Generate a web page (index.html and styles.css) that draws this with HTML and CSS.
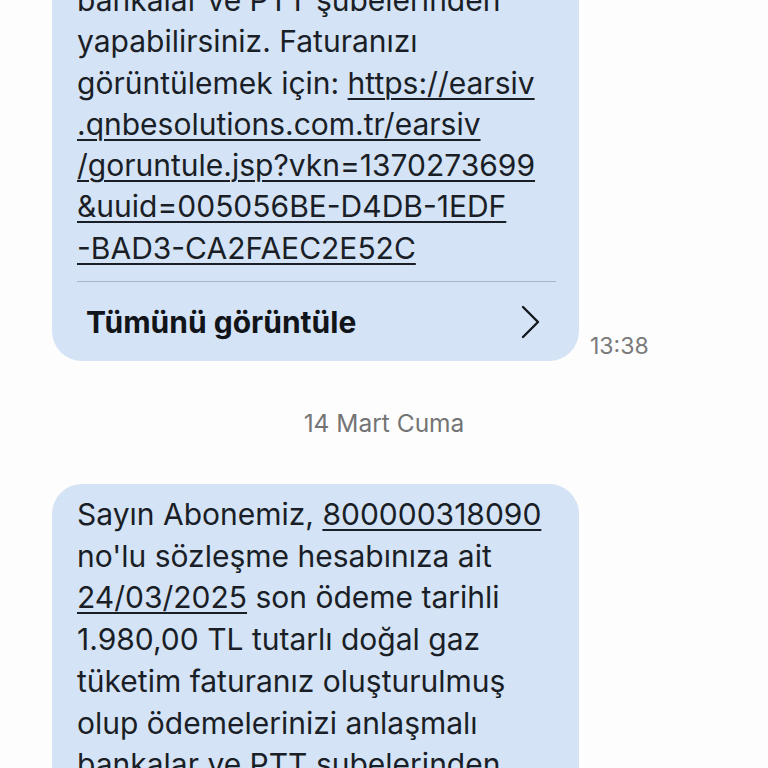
FILE: index.html
```html
<!DOCTYPE html>
<html lang="tr">
<head>
  <meta charset="UTF-8" />
  <meta name="viewport" content="width=device-width, initial-scale=1.0"/>
  <title>Mesajlar</title>
  <link rel="stylesheet" href="styles.css">
</head>
<body>

  <div class="chat">

    <div class="row">
      <div class="bubble">
        <p class="msg">bankalar ve PTT şubelerinden<br>yapabilirsiniz. Faturanızı<br>görüntülemek için: <a href="#">https://earsiv<br>.qnbesolutions.com.tr/earsiv<br>/goruntule.jsp?vkn=1370273699<br>&amp;uuid=005056BE-D4DB-1EDF<br>-BAD3-CA2FAEC2E52C</a></p>
        <div class="more">
          <span>Tümünü görüntüle</span>
          <svg class="chevron" width="22" height="34" viewBox="0 0 22 34">
            <path d="M4 2 L19 17 L4 32" fill="none" stroke="#15181d" stroke-width="2.4" stroke-linecap="round" stroke-linejoin="round"/>
          </svg>
        </div>
      </div>
      <span class="time">13:38</span>
    </div>

    <div class="date">14 Mart Cuma</div>

    <div class="row">
      <div class="bubble new">
        <p class="msg">Sayın Abonemiz, <a href="#">800000318090</a><br>no'lu sözleşme hesabınıza ait<br><a href="#">24/03/2025</a> son ödeme tarihli<br>1.980,00 TL tutarlı doğal gaz<br>tüketim faturanız oluşturulmuş<br>olup ödemelerinizi anlaşmalı<br>bankalar ve PTT şubelerinden<br>yapabilirsiniz.</p>
      </div>
    </div>

  </div>

</body>
</html>
```

FILE: styles.css
```css
body {
  margin: 0;
  background: #fdfdfd;
  font-family: Inter, Roboto, sans-serif;
  color: #1a1e26;
  overflow: hidden;
}

.chat {
  margin-top: -32px;
  display: flex;
  flex-direction: column;
}

.row {
  display: flex;
  align-items: flex-end;
  gap: 11px;
  padding-left: 52px;
}

.bubble {
  width: 527px;
  box-sizing: border-box;
  background: #d4e3f5;
  border-radius: 30px;
  padding: 12px 23px 0 25px;
}

.bubble.new {
  padding-top: 10px;
}

.msg {
  margin: 0;
  font-size: 30px;
  line-height: 41.3px;
  white-space: nowrap;
}

.bubble.new .msg {
  line-height: 41.7px;
}

.msg a {
  color: inherit;
  text-decoration: underline;
  text-decoration-thickness: 2px;
  text-underline-offset: 4px;
}

.more {
  margin-top: 12px;
  border-top: 1.5px solid #a9b6c7;
  height: 79px;
  display: flex;
  align-items: center;
  justify-content: space-between;
  padding-left: 9px;
  padding-right: 15px;
}

.more span {
  font-size: 30px;
  font-weight: 700;
  color: #111418;
}

.time {
  font-size: 23px;
  color: #7a7a7a;
  margin-bottom: 1px;
}

.date {
  text-align: center;
  font-size: 24.5px;
  color: #747474;
  margin: 47px 0 46px;
}
```
